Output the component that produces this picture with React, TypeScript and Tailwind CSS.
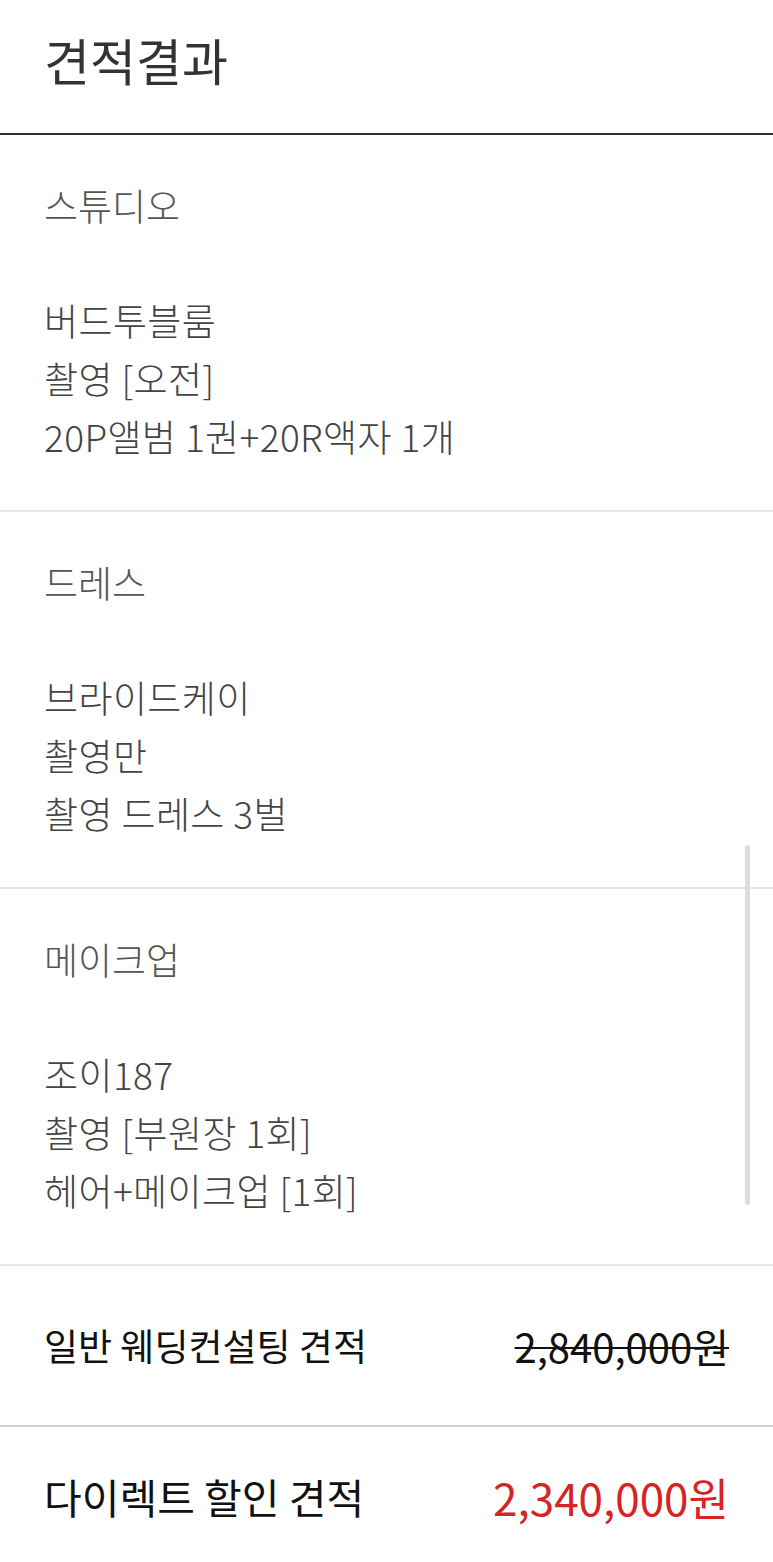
import React from "react";

// Estimate summary screen: vendor sections followed by the price comparison rows.

interface Section {
  label: string;
  lines: string[];
}

const sections: Section[] = [
  { label: "스튜디오", lines: ["버드투블룸", "촬영 [오전]", "20P앨범 1권+20R액자 1개"] },
  { label: "드레스", lines: ["브라이드케이", "촬영만", "촬영 드레스 3벌"] },
  { label: "메이크업", lines: ["조이187", "촬영 [부원장 1회]", "헤어+메이크업 [1회]"] },
];

function EstimateSection({ section }: { section: Section }) {
  return (
    <section className="border-b-2 border-[#e6e6e6] pl-11 pr-11 pt-[41px] pb-[45px]">
      <h2 className="text-[37px] leading-[58px] font-light text-[#555]">{section.label}</h2>
      <ul className="mt-[57px] text-[37px] leading-[58px] font-light tracking-[0.4px] text-[#444]">
        {section.lines.map((line) => (
          <li key={line}>{line}</li>
        ))}
      </ul>
    </section>
  );
}

export default function App() {
  return (
    <div
      className="relative min-h-[1562px] w-full bg-white"
      style={{ fontFamily: '"Noto Sans CJK KR", "Noto Sans", sans-serif' }}
    >
      <header className="h-[135px] border-b-2 border-[#333] pl-11 pt-[26px]">
        <h1 className="text-[50px] leading-[66px] font-normal text-[#333]">견적결과</h1>
      </header>

      {sections.map((s) => (
        <EstimateSection key={s.label} section={s} />
      ))}

      <div className="flex h-[161px] items-center justify-between border-b-2 border-[#d4d4d4] px-11">
        <span className="text-[37px] font-normal text-[#111]">일반 웨딩컨설팅 견적</span>
        <span className="text-[40px] font-normal text-[#111] line-through decoration-2">2,840,000원</span>
      </div>

      <div className="flex h-[140px] items-center justify-between px-11">
        <span className="text-[41px] font-normal text-[#111]">다이렉트 할인 견적</span>
        <span className="text-[44px] font-normal text-[#d42424]">2,340,000원</span>
      </div>

      {/* overlay scrollbar thumb */}
      <div className="absolute left-[745px] top-[845px] h-[360px] w-[5px] rounded-full bg-[#dcdcdc]" />
    </div>
  );
}
